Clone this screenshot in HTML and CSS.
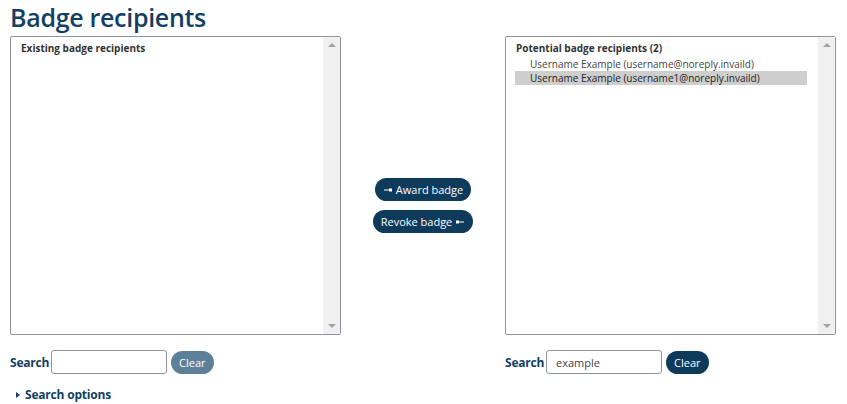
FILE: index.html
```html
<!DOCTYPE html>
<html>
<head>
<meta charset="utf-8">
<link rel="stylesheet" href="styles.css">
</head>
<body>
<h2 class="title">Badge recipients</h2>
<div class="selector">
  <div class="col">
    <div class="listbox">
      <div class="list">
        <div class="group">Existing badge recipients</div>
      </div>
      <div class="scroll"><span class="arrow up"></span><span class="arrow down"></span></div>
    </div>
    <div class="search">
      <label class="lbl">Search</label>
      <input class="inp" type="text" value="">
      <button class="btn disabled">Clear</button>
    </div>
    <div class="opts"><span class="tri"></span>Search options</div>
  </div>
  <div class="mid">
    <button class="btn act"><svg class="ico" width="10" height="6" viewBox="0 0 10 6"><rect x="1" y="2.5" width="8" height="1" fill="#fff"/><rect x="6" y="1.5" width="3" height="3" fill="#fff"/></svg>Award badge</button>
    <button class="btn act">Revoke badge<svg class="ico r" width="10" height="6" viewBox="0 0 10 6"><rect x="1" y="2.5" width="8" height="1" fill="#fff"/><rect x="1" y="1.5" width="3" height="3" fill="#fff"/></svg></button>
  </div>
  <div class="col">
    <div class="listbox">
      <div class="list">
        <div class="group">Potential badge recipients (2)</div>
        <div class="opt">Username Example (username@noreply.invaild)</div>
        <div class="opt sel">Username Example (username1@noreply.invaild)</div>
      </div>
      <div class="scroll"><span class="arrow up"></span><span class="arrow down"></span></div>
    </div>
    <div class="search">
      <label class="lbl">Search</label>
      <input class="inp" type="text" value="example">
      <button class="btn">Clear</button>
    </div>
  </div>
</div>
</body>
</html>
```
FILE: styles.css
```css
body { margin: 0; padding: 0 10px; font-family: "Open Sans", "Noto Sans", sans-serif; color: #1d2125; background: #fff; }
.title { margin: 0; padding-top: 1px; height: 35px; font-size: 25px; font-weight: 600; color: #123f63; line-height: 32px; letter-spacing: -0.3px; }
.selector { display: flex; align-items: flex-start; }
.col { width: 331px; }
.listbox { height: 297px; border: 1px solid #8f959e; border-radius: 2px; display: flex; }
.list { flex: 1; padding: 4px 4px; font-size: 10px; }
.group { font-weight: 700; color: #333; padding-left: 6px; height: 14px; line-height: 14px; margin-bottom: 2px; }
.opt { padding-left: 15px; height: 14px; line-height: 14px; color: #444; margin-left: 5px; margin-right: 7px; }
.opt.sel { background: #cecece; color: #222; }
.scroll { width: 17px; background: #f0f0f0; position: relative; }
.arrow { position: absolute; left: 5px; width: 0; height: 0; border-left: 4px solid transparent; border-right: 4px solid transparent; }
.arrow.up { top: 6px; border-bottom: 4px solid #a3a3a3; }
.arrow.down { bottom: 6px; border-top: 4px solid #a3a3a3; }
.mid { width: 164px; display: flex; flex-direction: column; align-items: center; gap: 9px; padding-top: 142px; }
.btn { font-family: inherit; font-size: 11px; border: none; border-radius: 12px; background: #0e3a5c; color: #fff; height: 23px; padding: 0 8px; display: inline-flex; align-items: center; }
.ico { margin-right: 3px; }
.ico.r { margin-right: 0; margin-left: 3px; }
.btn.disabled { background: #5e7f98; }
.search { display: flex; align-items: center; margin-top: 15px; gap: 4px; }
.lbl { font-weight: 700; font-size: 12px; color: #123f63; width: 37px; letter-spacing: -0.2px; }
.inp { width: 116px; height: 24px; box-sizing: border-box; border: 1px solid #8f959e; border-radius: 3px; font-family: inherit; font-size: 11px; padding: 0 9px; color: #444; margin: 0; }
.opts { margin-top: 12px; padding-left: 6px; font-weight: 700; font-size: 12px; color: #123f63; display: flex; align-items: center; gap: 5px; letter-spacing: -0.2px; }
.tri { width: 0; height: 0; border-top: 3px solid transparent; border-bottom: 3px solid transparent; border-left: 4px solid #123f63; }
```
